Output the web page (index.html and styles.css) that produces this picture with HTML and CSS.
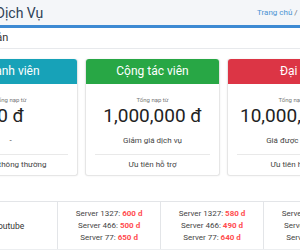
FILE: index.html
```html
<!DOCTYPE html>
<html>
	<head>
		<meta charset="UTF-8">
		<title>Bảng giá dịch vụ</title>
		<link rel="stylesheet" href="styles.css">
	</head>
	<body>
		<div class="page">
			<div class="content-header">
				<h1>Bảng giá Dịch Vụ</h1>
				<div class="breadcrumb">
					<a href="#">Trang chủ</a><span class="sep">/</span>Bảng giá
				</div>
			</div>
			<div class="card">
				<div class="card-header">Bậc tài khoản</div>
				<div class="card-body">
					<div class="tiers">
						<div class="tier">
							<div class="tier-head teal">Thành viên</div>
							<div class="tier-body">
								<div class="label">Tổng nạp từ</div>
								<div class="amount">0 đ</div>
								<div class="perk">-</div>
								<div class="rule"></div>
								<div class="perk">Hỗ trợ thông thường</div>
							</div>
						</div>
						<div class="tier">
							<div class="tier-head green">Cộng tác viên</div>
							<div class="tier-body">
								<div class="label">Tổng nạp từ</div>
								<div class="amount">1,000,000 đ</div>
								<div class="perk">Giảm giá dịch vụ</div>
								<div class="rule"></div>
								<div class="perk">Ưu tiên hỗ trợ</div>
							</div>
						</div>
						<div class="tier">
							<div class="tier-head red">Đại lý</div>
							<div class="tier-body">
								<div class="label">Tổng nạp từ</div>
								<div class="amount">10,000,000 đ</div>
								<div class="perk">Giá được ưu đãi</div>
								<div class="rule"></div>
								<div class="perk">Ưu tiên hỗ trợ</div>
							</div>
						</div>
					</div>

					<table class="prices">
						<tr>
							<td class="service">Tăng view youtube</td>
							<td>
								Server 1327: <b>600 d</b><br>
								Server 466: <b>500 d</b><br>
								Server 77: <b>650 d</b>
							</td>
							<td>
								Server 1327: <b>580 d</b><br>
								Server 466: <b>490 d</b><br>
								Server 77: <b>640 d</b>
							</td>
							<td>
								Server 1327: <b>560 d</b><br>
								Server 466: <b>480 d</b><br>
								Server 77: <b>630 d</b>
							</td>
						</tr>
					</table>
				</div>
			</div>
		</div>
	</body>
</html>
```

FILE: styles.css
```css
html, body {
	margin: 0;
	background: #fff;
	overflow: hidden;
	font-family: Roboto, "Noto Sans", sans-serif;
	color: #333;
}
.page {
	margin-left: -65px;
	width: 440px;
}
.content-header {
	display: flex;
	align-items: center;
	height: 25px;
	padding-right: 8px;
	background: #f4f6f9;
}
.content-header h1 {
	margin: 0;
	padding-left: 3px;
	font-size: 14px;
	font-weight: 400;
	color: #2f4257;
}
.breadcrumb {
	margin-left: auto;
	width: 110px;
	white-space: nowrap;
	font-size: 8px;
	color: #6c757d;
}
.breadcrumb a {
	color: #4b93d3;
	text-decoration: none;
}
.breadcrumb .sep {
	padding: 0 5px 0 2px;
}
.card {
	border-top: 3px solid #3d8ad3;
	background: #fff;
}
.card-header {
	height: 20px;
	line-height: 20px;
	padding-left: 7px;
	font-size: 11px;
	color: #333;
	border-bottom: 1px solid #e7e9ec;
}
.card-body {
	padding: 10px 8px 0;
}
.tiers {
	display: flex;
	gap: 7px;
}
.tier {
	width: 133px;
	flex: none;
	border: 1px solid #e6e6e6;
	border-top: none;
	border-radius: 3px;
	box-shadow: 0 0 2px rgba(0,0,0,0.08);
	text-align: center;
}
.tier-head {
	height: 25px;
	line-height: 25px;
	color: #fff;
	font-size: 12px;
	border-radius: 3px 3px 0 0;
}
.teal { background: #17a2b8; }
.green { background: #28a745; }
.red { background: #dc3545; }
.tier-body {
	padding: 12px 9px 5px;
}
.label {
	font-size: 6px;
	line-height: 8px;
	color: #777;
}
.amount {
	font-size: 19px;
	line-height: 23px;
	color: #222;
}
.perk {
	font-size: 8px;
	line-height: 10px;
	color: #444;
	margin: 9px 0 0;
}
.rule {
	border-top: 1px solid #e9e9e9;
	margin-top: 8px;
}
.perk + .rule + .perk {
	margin-top: 5px;
}
.prices {
	margin-top: 25px;
	border-collapse: collapse;
	font-size: 8px;
	line-height: 12px;
	color: #444;
}
.prices td {
	height: 47px;
	width: 103px;
	padding: 0;
	text-align: center;
	border: 1px solid #e3e5e8;
	border-bottom-color: #eceef0;
}
.prices td.service {
	width: 104px;
	text-align: left;
	padding-left: 11px;
	border-left: none;
	font-size: 8.5px;
	color: #333;
}
.prices b {
	color: #ff4d4f;
	font-weight: 700;
}
```
